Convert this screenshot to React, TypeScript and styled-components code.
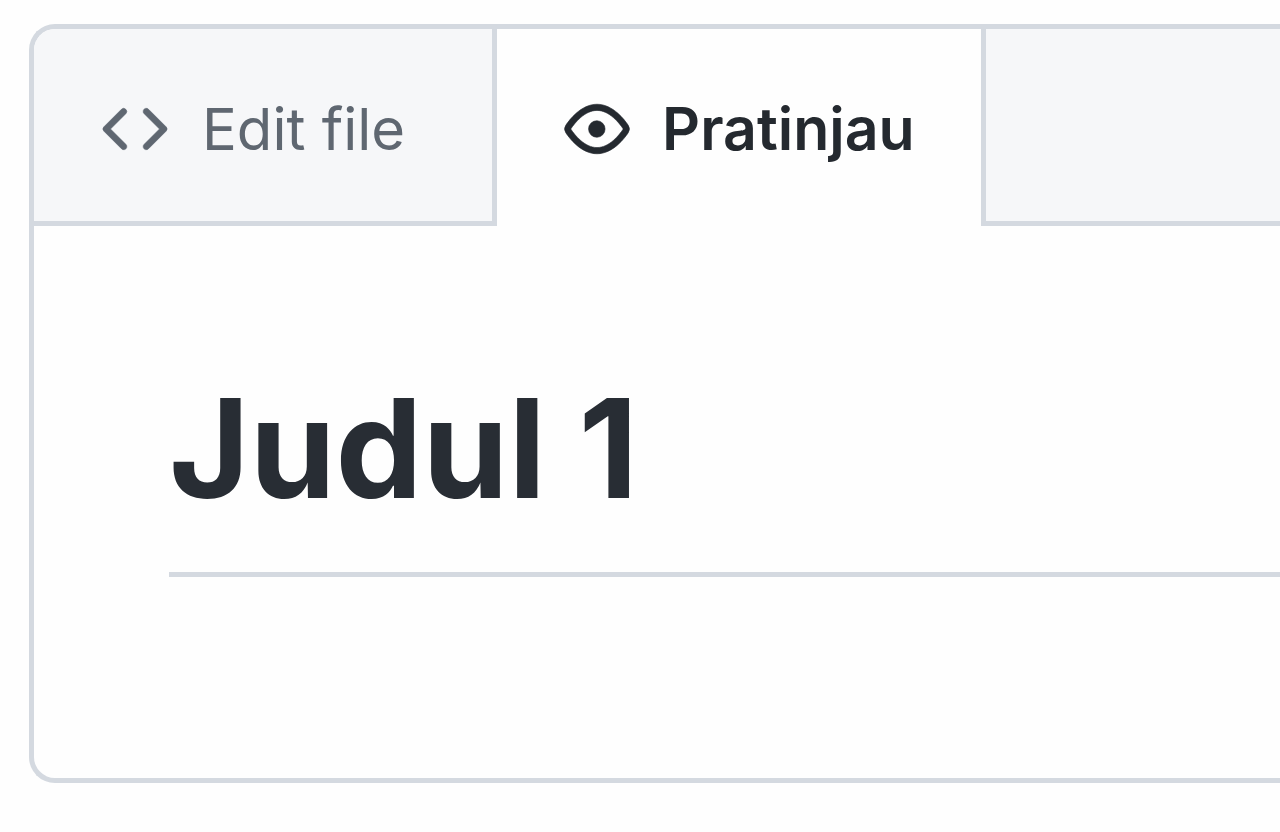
import React from "react";
import styled, { createGlobalStyle } from "styled-components";

const line = "#d4d9e0";

const Global = createGlobalStyle`
  * { box-sizing: border-box; }
  body { margin: 0; background: #fefefe; font-family: Inter, "Liberation Sans", sans-serif; color: #282d34; }
`;

const Page = styled.main`
  padding: 24px 0 48px 29px;
`;

const Panel = styled.section`
  border: 5px solid ${line};
  border-right: 0;
  border-radius: 26px 0 0 26px;
  background: #fefefe;
  overflow: hidden;
`;

const TabBar = styled.div`
  display: flex;
  height: 197px;
`;

const Tab = styled.button<{ $active?: boolean }>`
  display: flex;
  align-items: center;
  gap: ${(p) => (p.$active ? 32 : 34)}px;
  padding: ${(p) => (p.$active ? "3px 66px 0 67px" : "3px 87px 0 68px")};
  border: 0;
  border-right: 5px solid ${line};
  box-shadow: ${(p) => (p.$active ? "none" : `inset 0 -5px ${line}`)};
  background: ${(p) => (p.$active ? "#fefefe" : "#f6f7f9")};
  color: ${(p) => (p.$active ? "#24292f" : "#5f6771")};
  font-family: inherit;
  font-size: ${(p) => (p.$active ? 59 : 58)}px;
  font-weight: ${(p) => (p.$active ? 600 : 400)};
  line-height: 72px;
  white-space: nowrap;
`;

const Filler = styled.div`
  flex: 1;
  border-bottom: 5px solid ${line};
  background: #f6f7f9;
`;

const Icon = styled.svg`
  width: 66px;
  height: 66px;
  flex: none;
  overflow: visible;
  stroke: currentColor;
  stroke-width: 0.15;
`;

const Preview = styled.article`
  padding: 136px 0 201px 135px;
`;

const Title = styled.h1`
  margin: 0;
  padding-bottom: 38px;
  border-bottom: 5px solid ${line};
  font-size: 138px;
  font-weight: 700;
  line-height: 172px;
`;

export default function App() {
  return (
    <>
      <Global />
      <Page>
        <Panel>
          <TabBar>
            <Tab type="button">
              <Icon viewBox="0 0 16 16" fill="currentColor" aria-hidden="true">
                <path d="m11.28 3.22 4.25 4.25a.75.75 0 0 1 0 1.06l-4.25 4.25a.749.749 0 0 1-1.275-.326.749.749 0 0 1 .215-.734L13.94 8l-3.72-3.72a.749.749 0 0 1 .326-1.275.749.749 0 0 1 .734.215Zm-6.56 0a.751.751 0 0 1 1.042.018.751.751 0 0 1 .018 1.042L2.06 8l3.72 3.72a.749.749 0 0 1-.326 1.275.749.749 0 0 1-.734-.215L.47 8.53a.75.75 0 0 1 0-1.06Z" />
              </Icon>
              Edit file
            </Tab>
            <Tab type="button" $active>
              <Icon viewBox="0 0 16 16" fill="currentColor" aria-hidden="true">
                <path d="M8 2c1.981 0 3.671.992 4.933 2.078 1.27 1.091 2.187 2.345 2.637 3.023a1.62 1.62 0 0 1 0 1.798c-.45.678-1.367 1.932-2.637 3.023C11.67 13.008 9.981 14 8 14c-1.981 0-3.671-.992-4.933-2.078C1.797 10.83.88 9.576.43 8.898a1.62 1.62 0 0 1 0-1.798c.45-.677 1.367-1.931 2.637-3.022C4.33 2.992 6.019 2 8 2ZM1.679 7.932a.12.12 0 0 0 0 .136c.411.622 1.241 1.75 2.366 2.717C5.176 11.758 6.527 12.5 8 12.5c1.473 0 2.825-.742 3.955-1.715 1.124-.967 1.954-2.096 2.366-2.717a.12.12 0 0 0 0-.136c-.412-.621-1.242-1.75-2.366-2.717C10.824 4.242 9.473 3.5 8 3.5c-1.473 0-2.825.742-3.955 1.715-1.124.967-1.954 2.096-2.366 2.717ZM8 10a2 2 0 1 1-.001-3.999A2 2 0 0 1 8 10Z" />
              </Icon>
              Pratinjau
            </Tab>
            <Filler />
          </TabBar>
          <Preview>
            <Title>Judul 1</Title>
          </Preview>
        </Panel>
      </Page>
    </>
  );
}
